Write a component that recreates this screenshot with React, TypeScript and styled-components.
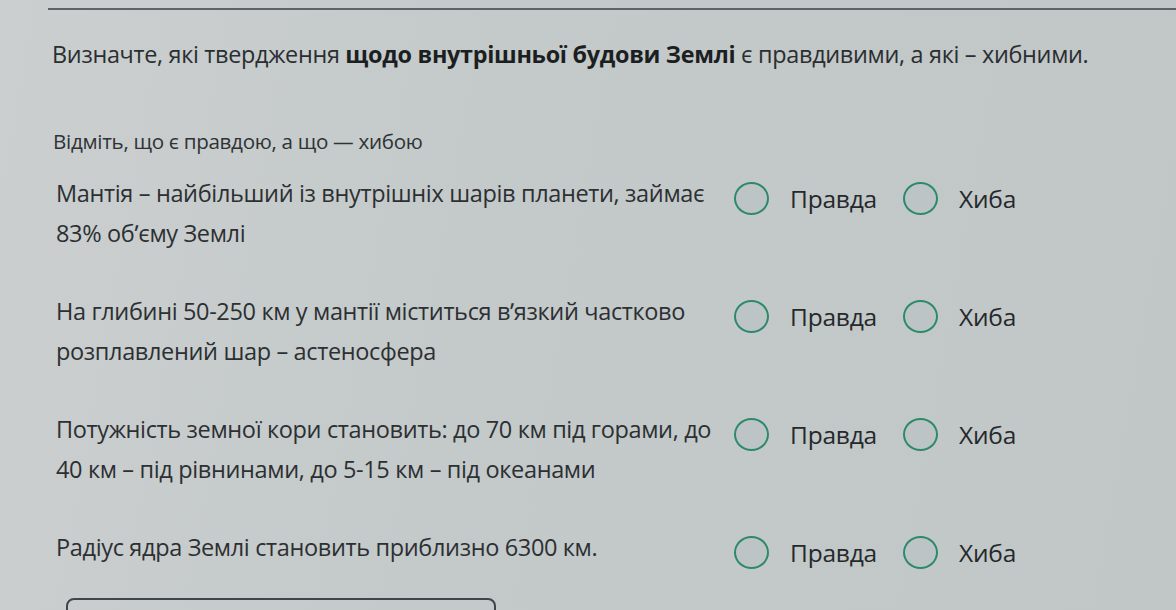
import React from "react";
import styled, { createGlobalStyle } from "styled-components";

const Global = createGlobalStyle`
  html, body { margin: 0; padding: 0; }
  body {
    background: #c4c9ca;
    font-family: "Open Sans", "Noto Sans", "DejaVu Sans", sans-serif;
    color: #2b2f31;
  }
`;

const Page = styled.div`
  width: 1176px;
  height: 610px;
  overflow: hidden;
  box-sizing: border-box;
  padding: 8px 0 0 48px;
  background: linear-gradient(100deg, #cbcfd0 0%, #c4c9ca 40%, #c1c6c7 100%);
`;

const TopRule = styled.div`
  height: 2px;
  background: #5d6466;
  margin-right: -10px;
`;

const Title = styled.h1`
  margin: 29px 0 0 4px;
  font-size: 23.4px;
  line-height: 30px;
  font-weight: 400;
  letter-spacing: -0.3px;
  color: #2a2e30;
  white-space: nowrap;
  b { font-weight: 700; color: #1c1f21; }
`;

const Hint = styled.p`
  margin: 59px 0 0 5px;
  font-size: 20.6px;
  line-height: 26px;
  letter-spacing: -0.3px;
  color: #2f3335;
`;

const List = styled.div`
  display: flex;
  flex-direction: column;
  gap: 38px;
  margin-top: 19px;
`;

const Row = styled.div`
  display: grid;
  grid-template-columns: 686px 169px 169px;
  align-items: start;
`;

const Statement = styled.div`
  padding-left: 8px;
  font-size: 23.5px;
  line-height: 40px;
  letter-spacing: -0.35px;
  color: #2c3032;
`;

const Option = styled.label`
  display: flex;
  align-items: center;
  gap: 21px;
  height: 40px;
  padding-top: 5px;
  font-size: 24.5px;
  letter-spacing: -0.2px;
  color: #25292b;
`;

const Radio = styled.span`
  width: 35px;
  height: 33px;
  box-sizing: border-box;
  border-radius: 50%;
  border: 2px solid #2d8a68;
  background: #bcc4c6;
  flex: none;
`;

const SubmitBox = styled.div`
  margin: 26px 0 0 18px;
  width: 426px;
  height: 40px;
  border: 2px solid #3e4648;
  border-radius: 8px;
`;

const rows = [
  "Мантія – найбільший із внутрішніх шарів планети, займає 83% обʹєму Землі",
  "На глибині 50-250 км у мантії міститься вʹязкий частково розплавлений шар – астеносфера",
  "Потужність земної кори становить: до 70 км під горами, до 40 км – під рівнинами, до 5-15 км – під океанами",
  "Радіус ядра Землі становить приблизно 6300 км.",
];

export default function App() {
  return (
    <>
      <Global />
      <Page>
        <TopRule />
        <Title>
          Визначте, які твердження <b>щодо внутрішньої будови Землі</b> є правдивими, а які – хибними.
        </Title>
        <Hint>Відміть, що є правдою, а що — хибою</Hint>
        <List>
          {rows.map((r, i) => (
            <Row key={i}>
              <Statement>{r}</Statement>
              <Option>
                <Radio />
                Правда
              </Option>
              <Option>
                <Radio />
                Хиба
              </Option>
            </Row>
          ))}
        </List>
        <SubmitBox />
      </Page>
    </>
  );
}
